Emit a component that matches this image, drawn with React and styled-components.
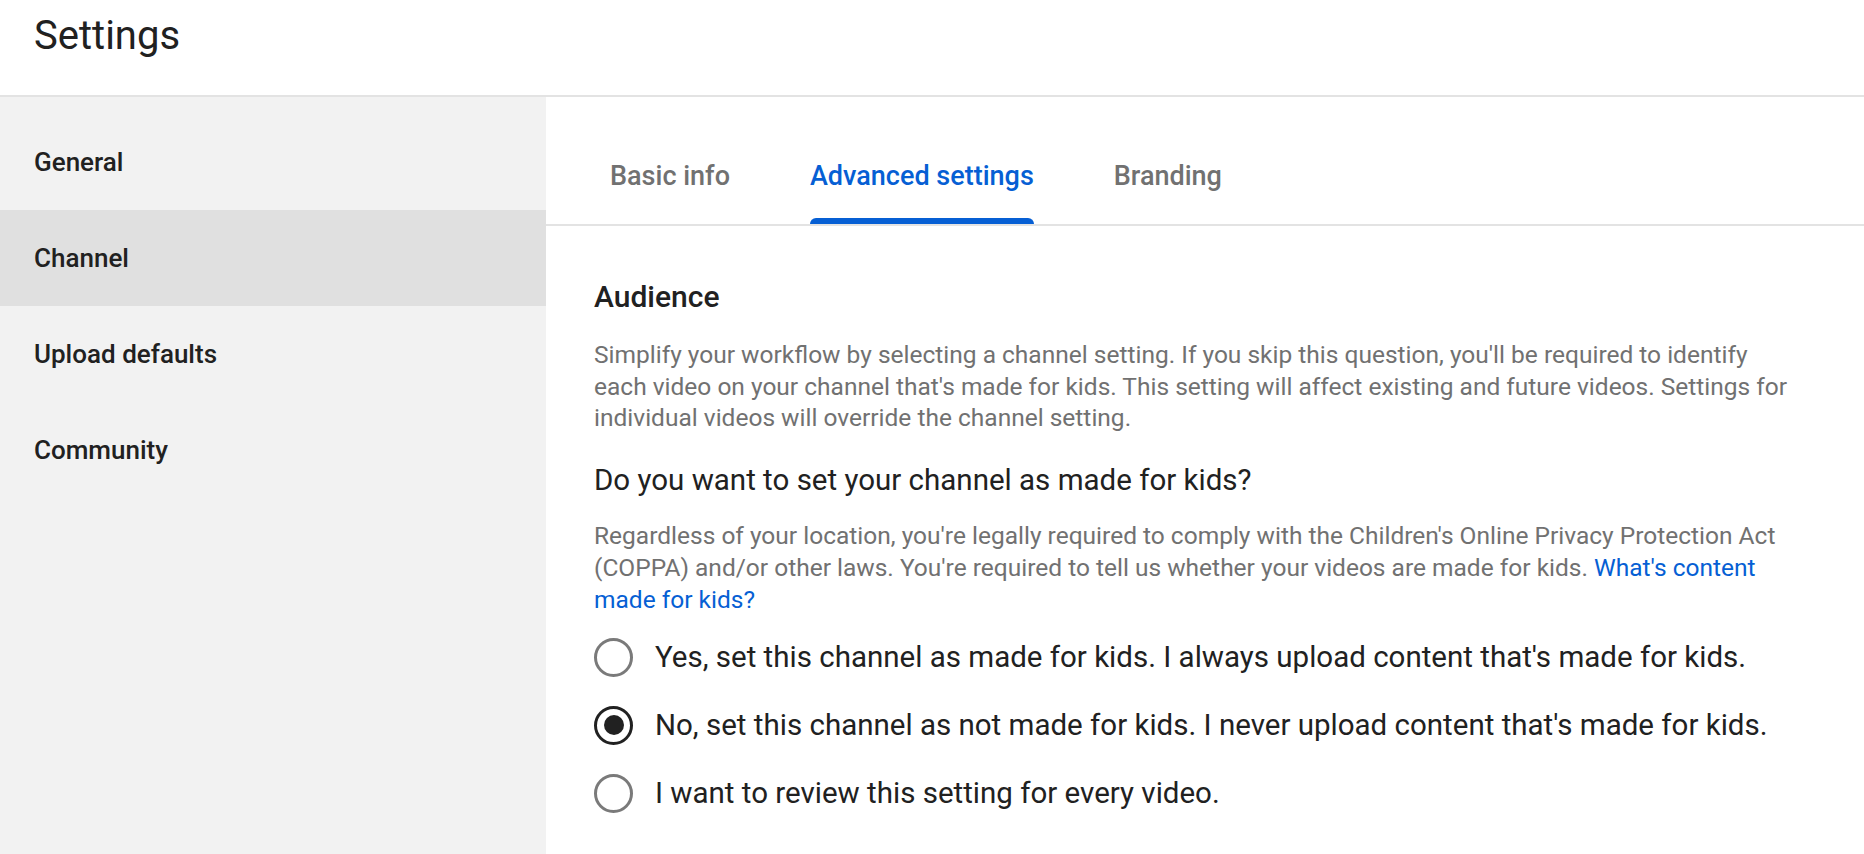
import React, { useState } from "react";
import styled, { createGlobalStyle } from "styled-components";

const GlobalStyle = createGlobalStyle`
  html, body {
    margin: 0;
    padding: 0;
    background: #ffffff;
  }
  body {
    font-family: Roboto, "Noto Sans", Arial, sans-serif;
    color: #212121;
    -webkit-font-smoothing: antialiased;
  }
  * {
    box-sizing: border-box;
  }
`;

const Page = styled.div`
  display: flex;
  flex-direction: column;
  height: 854px;
  overflow: hidden;
`;

const Header = styled.header`
  height: 97px;
  flex-shrink: 0;
  display: flex;
  align-items: flex-start;
  padding: 12px 34px 0;
  border-bottom: 2px solid #e3e3e3;
`;

const Title = styled.h1`
  margin: 0;
  font-size: 40px;
  font-weight: 400;
  line-height: 48px;
  color: #212121;
`;

const Body = styled.div`
  flex: 1;
  display: flex;
  min-height: 0;
`;

const Sidebar = styled.nav`
  width: 546px;
  flex-shrink: 0;
  background: #f2f2f2;
  padding-top: 17px;
  display: flex;
  flex-direction: column;
`;

const NavItem = styled.div`
  height: 96px;
  display: flex;
  align-items: center;
  padding-left: 34px;
  font-size: 26px;
  font-weight: 500;
  color: #212121;
  background: ${(p) => (p.$active ? "#e0e0e0" : "transparent")};
  cursor: pointer;
`;

const Main = styled.main`
  flex: 1;
  display: flex;
  flex-direction: column;
  min-width: 0;
`;

const TabBar = styled.div`
  height: 129px;
  display: flex;
  align-items: stretch;
  gap: 80px;
  padding-left: 64px;
  border-bottom: 2px solid #e3e3e3;
`;

const Tab = styled.div`
  position: relative;
  display: flex;
  align-items: flex-end;
  padding-bottom: 33px;
  font-size: 27px;
  line-height: 30px;
  font-weight: 500;
  color: ${(p) => (p.$active ? "#065fd4" : "#717171")};
  cursor: pointer;

  &::after {
    content: "";
    display: ${(p) => (p.$active ? "block" : "none")};
    position: absolute;
    left: 0;
    right: 0;
    bottom: 0;
    height: 6px;
    border-radius: 6px 6px 0 0;
    background: #065fd4;
  }
`;

const Content = styled.section`
  padding: 0 62px 0 48px;
`;

const SectionTitle = styled.h2`
  margin: 53px 0 0;
  font-size: 30px;
  line-height: 36px;
  font-weight: 500;
  color: #212121;
`;

const Description = styled.p`
  margin: ${(p) => p.$top}px 0 0;
  font-size: 24.5px;
  line-height: 31.7px;
  color: #717171;
`;

const Link = styled.a`
  color: #065fd4;
  text-decoration: none;
`;

const Question = styled.h3`
  margin: 28px 0 0;
  font-size: 29.5px;
  line-height: 36px;
  font-weight: 400;
  color: #212121;
`;

const RadioGroup = styled.div`
  margin-top: 8px;
  display: flex;
  flex-direction: column;
`;

const RadioRow = styled.label`
  height: 68px;
  display: flex;
  align-items: center;
  gap: 22px;
  cursor: pointer;
`;

const RadioCircle = styled.span`
  width: 39px;
  height: 39px;
  flex-shrink: 0;
  border-radius: 50%;
  border: 3.3px solid ${(p) => (p.$checked ? "#212121" : "#7a7a7a")};
  display: flex;
  align-items: center;
  justify-content: center;

  &::after {
    content: "";
    display: ${(p) => (p.$checked ? "block" : "none")};
    width: 20px;
    height: 20px;
    border-radius: 50%;
    background: #212121;
  }
`;

const RadioLabel = styled.span`
  font-size: 29.5px;
  line-height: 36px;
  color: #212121;
  white-space: nowrap;
`;

const navItems = ["General", "Channel", "Upload defaults", "Community"];
const tabs = ["Basic info", "Advanced settings", "Branding"];
const options = [
  "Yes, set this channel as made for kids. I always upload content that's made for kids.",
  "No, set this channel as not made for kids. I never upload content that's made for kids.",
  "I want to review this setting for every video.",
];

export default function App() {
  const [nav, setNav] = useState("Channel");
  const [tab, setTab] = useState("Advanced settings");
  const [choice, setChoice] = useState(1);

  return (
    <Page>
      <GlobalStyle />
      <Header>
        <Title>Settings</Title>
      </Header>
      <Body>
        <Sidebar>
          {navItems.map((item) => (
            <NavItem key={item} $active={item === nav} onClick={() => setNav(item)}>
              {item}
            </NavItem>
          ))}
        </Sidebar>
        <Main>
          <TabBar>
            {tabs.map((t) => (
              <Tab key={t} $active={t === tab} onClick={() => setTab(t)}>
                {t}
              </Tab>
            ))}
          </TabBar>
          <Content>
            <SectionTitle>Audience</SectionTitle>
            <Description $top={24}>
              Simplify your workflow by selecting a channel setting. If you skip this question,
              you'll be required to identify each video on your channel that's made for kids. This
              setting will affect existing and future videos. Settings for individual videos will
              override the channel setting.
            </Description>
            <Question>Do you want to set your channel as made for kids?</Question>
            <Description $top={22}>
              Regardless of your location, you're legally required to comply with the Children's
              Online Privacy Protection Act (COPPA) and/or other laws. You're required to tell us
              whether your videos are made for kids.{" "}
              <Link href="#">What's content made for kids?</Link>
            </Description>
            <RadioGroup>
              {options.map((o, i) => (
                <RadioRow key={i} onClick={() => setChoice(i)}>
                  <RadioCircle $checked={choice === i} />
                  <RadioLabel>{o}</RadioLabel>
                </RadioRow>
              ))}
            </RadioGroup>
          </Content>
        </Main>
      </Body>
    </Page>
  );
}
